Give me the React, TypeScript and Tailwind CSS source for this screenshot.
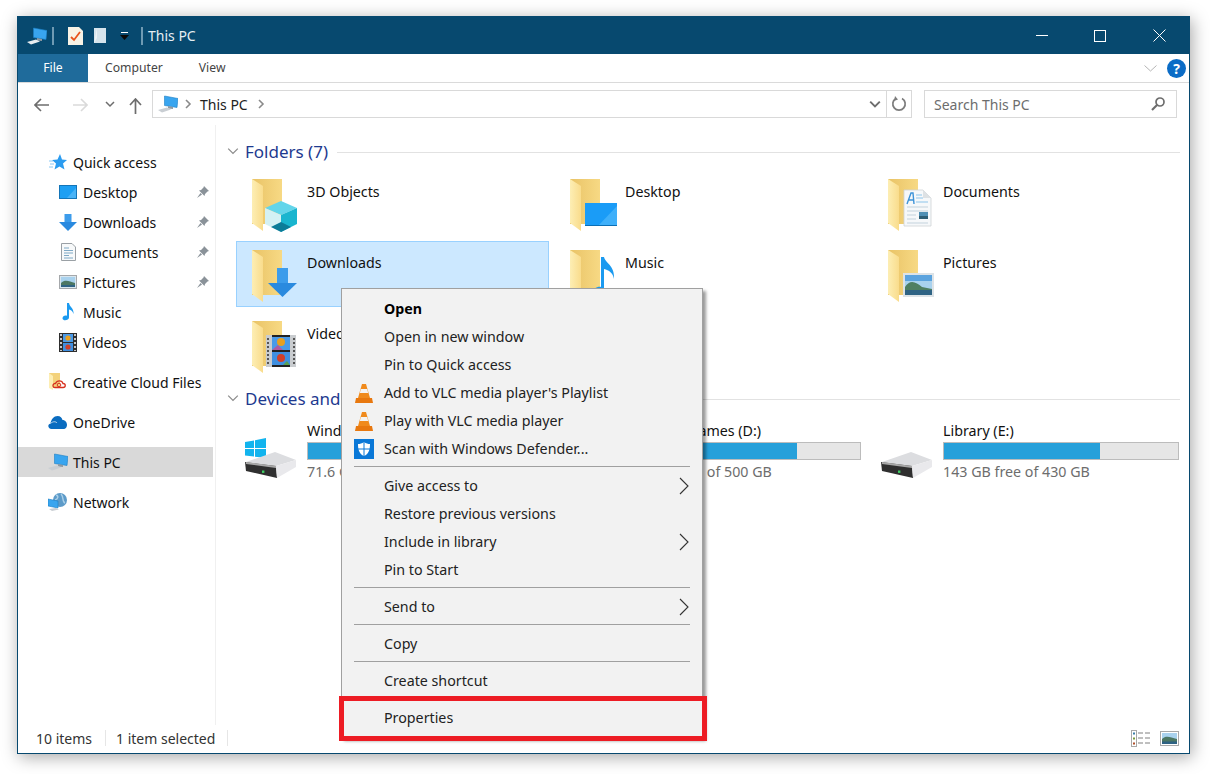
import type { ReactNode } from "react";

function PcIcon({ base = "#c9ced3" }: { base?: string }) {
    return (
        <svg width="20" height="18" viewBox="0 0 20 18" className="shrink-0">
            <path d="M6.5 1 L20 3.5 L19 12.5 L6.5 10.5 Z" fill="#39a5ef" stroke="#1c7fc4" strokeWidth="0.6" />
            <path d="M10 11 L15 12 L15 14 L10 13.5 Z" fill="#8f9aa3" />
            <path d="M0 15 L9 12.5 L13 14.5 L4 17.5 Z" fill={base} />
        </svg>
    );
}

function Chevron({ className = "", dir = "right", color = "#7a7a7a", w = 1.6 }: { className?: string; dir?: "right" | "down"; color?: string; w?: number }) {
    return (
        <svg width="10" height="10" viewBox="0 0 10 10" className={`shrink-0 ${className}`}>
            <path d={dir === "right" ? "M3 1 L7 5 L3 9" : "M1 3 L5 7 L9 3"} fill="none" stroke={color} strokeWidth={w} />
        </svg>
    );
}

function Folder({ children }: { children?: ReactNode }) {
    return (
        <svg width="50" height="56" viewBox="0 0 50 56" className="shrink-0">
            <defs>
                <linearGradient id="fback" x1="0" y1="0" x2="1" y2="0">
                    <stop offset="0" stopColor="#e9c366" />
                    <stop offset="1" stopColor="#f7d984" />
                </linearGradient>
                <linearGradient id="fflap" x1="0" y1="0" x2="1" y2="0">
                    <stop offset="0" stopColor="#fdeeb4" />
                    <stop offset="1" stopColor="#f9dc8c" />
                </linearGradient>
            </defs>
            <rect x="2" y="1" width="30" height="45" fill="url(#fback)" />
            <path d="M2 1 L13 8 L13 53 L2 45 Z" fill="url(#fflap)" />
            {children}
        </svg>
    );
}

const overlayCube = (
    <g>
        <path d="M15 30 L31 23 L47 30 L31 37 Z" fill="#63d5ea" />
        <path d="M15 30 L31 37 L31 54 L15 46 Z" fill="#d4f1f4" />
        <path d="M31 37 L47 30 L47 46 L31 54 Z" fill="#19b5cf" />
        <path d="M21 49 L31 44 L41 49 L31 54 Z" fill="#0c7c98" />
    </g>
);

const overlayArrow = (
    <g>
        <rect x="27" y="19" width="11" height="16" fill="#3c9ceb" />
        <path d="M18 34 L47 34 L32.5 48 Z" fill="#2a8adf" />
    </g>
);

const overlayDesktop = (
    <g>
        <rect x="17" y="25" width="32" height="23" fill="#1a9cf7" />
        <path d="M30 48 L49 28 L49 48 Z" fill="#3fb0fa" />
        <rect x="17" y="47" width="32" height="1" fill="#0b6fb5" />
    </g>
);

const overlayDoc = (
    <g>
        <path d="M18 12 L37 12 L45 20 L45 48 L18 48 Z" fill="#f6f8fa" stroke="#cfd3d6" strokeWidth="0.8" />
        <path d="M37 12 L37 20 L45 20 Z" fill="#dde1e4" />
        <path d="M21 26 L25 15 L27 15 L28 26 M23 22 H27" fill="none" stroke="#3d93d8" strokeWidth="1.4" />
        <path d="M30 17 H36 M30 20 H37 M30 24 H42" stroke="#8cc4ea" strokeWidth="1" />
        <path d="M21 29 H42 M21 33 H42 M21 37 H30 M21 41 H30 M21 45 H42" stroke="#c3d2dc" strokeWidth="1" />
        <rect x="33" y="34" width="9" height="7" fill="#4f8fb4" />
        <rect x="33" y="38" width="9" height="3" fill="#2d5d74" />
    </g>
);

const overlayPicture = (
    <g>
        <rect x="17" y="24" width="31" height="24" fill="#dde3e7" />
        <rect x="19" y="26" width="27" height="20" fill="#a9d2ee" />
        <rect x="19" y="26" width="27" height="6" fill="#5ba3de" />
        <path d="M19 38 C24 30 30 33 36 38 L46 40 L46 46 L19 46 Z" fill="#4f7f62" />
        <rect x="19" y="41" width="27" height="5" fill="#2f6384" />
    </g>
);

const overlayNote = (
    <path d="M33 8 L36 8 C37 14 47 16 46 30 C45 24 41 21 36 20 L36 40 C36 46 27 47 25 44 C24 40 30 37 33 38 Z" fill="#1b9af0" />
);

const overlayFilm = (
    <g>
        <rect x="16" y="15" width="30" height="32" fill="#c9cccf" />
        <rect x="22" y="15" width="18" height="32" fill="#222" />
        <rect x="22" y="17" width="18" height="13" fill="#4a9ae8" />
        <rect x="22" y="32" width="18" height="13" fill="#3f8fe0" />
        <circle cx="31" cy="22" r="4" fill="#e8a020" />
        <circle cx="31" cy="38" r="4" fill="#d0402a" />
        <path d="M22 30 L28 25 L33 30 Z" fill="#b05aa0" />
        <path d="M33 45 L37 41 L40 45 Z" fill="#5aa050" />
        <path d="M18 18 V45 M44 18 V45" stroke="#555" strokeWidth="2" strokeDasharray="2 2" />
    </g>
);

function Drive({ windows = false }: { windows?: boolean }) {
    return (
        <svg width="52" height="40" viewBox="0 0 52 40" className="shrink-0">
            {windows && (
                <path d="M0 4 L9 2.5 L9 10 L0 10 Z M10 2.2 L21 0 L21 10 L10 10 Z M0 11 L9 11 L9 18.5 L0 17.5 Z M10 11 L21 11 L21 20 L10 18.7 Z" fill="#12b4ee" />
            )}
            <g transform="translate(0 14)">
                <path d="M1 10 L30 0 L51 8 L31 14 Z" fill="#dcdde0" />
                <path d="M0 10 L31 14 L32 26 L1 19 Z" fill="#2f2f2f" />
                <path d="M1 10 L31 14 L31 16 L1 12 Z" fill="#a8a8a8" />
                <path d="M31 14 L51 8 L51 15 L32 26 Z" fill="#e9e9ec" />
                <rect x="17" y="18.5" width="2.4" height="2.4" fill="#3ed062" />
            </g>
        </svg>
    );
}

function Pin() {
    return (
        <svg width="12" height="12" viewBox="0 0 12 12" className="shrink-0">
            <path d="M7 0 L12 5 L10.5 5.5 L8 8 L7.5 10 L2 4.5 L4 4 L6.5 1.5 Z" fill="#8a9299" />
            <path d="M3.5 7 L0 12 L5 8.5 Z" fill="#8a9299" />
        </svg>
    );
}

const navIcons: Record<string, ReactNode> = {
    star: (
        <svg width="18" height="16" viewBox="0 0 18 16">
            <path d="M11 0 L13 5.5 L18 6 L14 9.5 L15.5 15.5 L10.5 12.5 L5.5 15.5 L7 9.5 L3 6 L8.5 5.5 Z" fill="#2b9cf0" />
            <path d="M0 7 H4 M1 10 H5 M0 13 H4" stroke="#8ac8f4" strokeWidth="1" />
        </svg>
    ),
    desktop: (
        <svg width="18" height="14" viewBox="0 0 18 14">
            <rect x="0.5" y="0.5" width="17" height="13" fill="#1d9ff3" stroke="#1475b8" />
            <path d="M8 13 L17 3 L17 13 Z" fill="#49b3f7" />
        </svg>
    ),
    downloads: (
        <svg width="18" height="17" viewBox="0 0 18 17">
            <rect x="5.5" y="0" width="7" height="9" fill="#3c9ceb" />
            <path d="M0 8 L18 8 L9 17 Z" fill="#2a8adf" />
        </svg>
    ),
    documents: (
        <svg width="15" height="18" viewBox="0 0 15 18">
            <path d="M0.5 0.5 H11 L14.5 4 V17.5 H0.5 Z" fill="#f7f9fa" stroke="#9aa0a5" />
            <path d="M3 5 H8 M3 7.5 H12 M3 10 H12 M3 12.5 H8 M3 15 H12" stroke="#7fa9c6" strokeWidth="1" />
        </svg>
    ),
    pictures: (
        <svg width="18" height="14" viewBox="0 0 18 14">
            <rect x="0.5" y="0.5" width="17" height="13" fill="#d9e6ee" stroke="#a5a8ab" />
            <rect x="2" y="2" width="14" height="10" fill="#a9d2ee" />
            <path d="M2 8 C6 4 10 6 16 8 V12 H2 Z" fill="#4c7763" />
            <rect x="2" y="10" width="14" height="2" fill="#2f6384" />
        </svg>
    ),
    music: (
        <svg width="12" height="18" viewBox="0 0 12 18">
            <path d="M5 0 H7 C7.5 4 12 5 11.5 11 C10.5 8 9 7 7 6.5 V14.5 C7 17.5 1 18.5 0.5 15.5 C0.5 13 3 12 5 12.8 Z" fill="#1b9af0" />
        </svg>
    ),
    videos: (
        <svg width="18" height="19" viewBox="0 0 18 19">
            <rect width="18" height="19" fill="#2e2e2e" />
            <path d="M2 1 V18 M16 1 V18" stroke="#c8c8c8" strokeWidth="2" strokeDasharray="2 2" />
            <rect x="4" y="1" width="10" height="8" fill="#4a9ae8" />
            <rect x="4" y="10" width="10" height="8" fill="#3f8fe0" />
            <circle cx="9" cy="5" r="2.6" fill="#e8a020" />
            <circle cx="9" cy="14" r="2.6" fill="#d0402a" />
        </svg>
    ),
    cloudFiles: (
        <svg width="18" height="18" viewBox="0 0 18 18">
            <rect x="1" y="0" width="11" height="15" fill="#f3d27c" />
            <path d="M1 0 L5 3 L5 17 L1 15 Z" fill="#fdeeb4" />
            <path d="M7 14.5 C4 14.5 4.5 10 7.5 10.5 C9 7 14 7 15 10.5 C18 10.5 18 14.5 15 14.5 Z" fill="none" stroke="#d7301f" strokeWidth="1.3" />
            <circle cx="11" cy="12" r="1.8" fill="none" stroke="#d7301f" strokeWidth="1" />
        </svg>
    ),
    onedrive: (
        <svg width="19" height="13" viewBox="0 0 19 13">
            <path d="M3.5 13 C0 13 -1 8.5 2.5 7.5 C3 3.5 6 0 9.5 0 C12.5 0 14 2 14.5 4 C18 4 20 8 18.5 11 C18 12.5 16.5 13 15.5 13 Z" fill="#0a6cc0" />
            <path d="M2.5 7.5 C5 5 8 5.5 9 7" fill="none" stroke="#fff" strokeWidth="0.7" />
        </svg>
    ),
    pc: <PcIcon />,
    network: (
        <svg width="20" height="18" viewBox="0 0 20 18">
            <circle cx="12" cy="7" r="7" fill="#5d9bc9" />
            <path d="M8 2 C11 3 10 6 7 7 M13 1 C16 4 14 9 17 10" fill="none" stroke="#a9cfe8" strokeWidth="1.4" />
            <path d="M0 6 L10 8 L10 15 L0 13 Z" fill="#39a5ef" stroke="#1c7fc4" strokeWidth="0.6" />
            <path d="M1 16 L8 15 L11 16.5 L4 18 Z" fill="#c9ced3" />
        </svg>
    ),
};

const quickItems = [
    { label: "Desktop", icon: "desktop", pin: true },
    { label: "Downloads", icon: "downloads", pin: true },
    { label: "Documents", icon: "documents", pin: true },
    { label: "Pictures", icon: "pictures", pin: true },
    { label: "Music", icon: "music", pin: false },
    { label: "Videos", icon: "videos", pin: false },
];

const topItems = [
    { label: "Creative Cloud Files", icon: "cloudFiles" },
    { label: "OneDrive", icon: "onedrive" },
    { label: "This PC", icon: "pc", active: true },
    { label: "Network", icon: "network" },
];

const folders = [
    { label: "3D Objects", overlay: overlayCube },
    { label: "Desktop", overlay: overlayDesktop },
    { label: "Documents", overlay: overlayDoc },
    { label: "Downloads", overlay: overlayArrow, selected: true },
    { label: "Music", overlay: overlayNote },
    { label: "Pictures", overlay: overlayPicture },
    { label: "Videos", overlay: overlayFilm },
];

const drives = [
    { label: "Windows (C:)", free: "71.6 GB free of 237 GB", used: 70, windows: true },
    { label: "Software Games (D:)", free: "199 GB free of 500 GB", used: 73 },
    { label: "Library (E:)", free: "143 GB free of 430 GB", used: 66.5 },
];

const vlcCone = (
    <svg width="18" height="19" viewBox="0 0 18 19">
        <path d="M7 0 H11 L15 14 H3 Z" fill="#f08a1c" />
        <path d="M5.8 5 H12.2 L13.2 9 H4.8 Z" fill="#f4f4f4" />
        <path d="M1 14 H17 L18 19 H0 Z" fill="#e8780f" />
    </svg>
);

const defender = (
    <svg width="20" height="20" viewBox="0 0 20 20">
        <rect width="20" height="20" fill="#0a78d7" />
        <path d="M10 3 C12 4.5 14 5 16 5 C16 11 14.5 15 10 17 C5.5 15 4 11 4 5 C6 5 8 4.5 10 3 Z" fill="#fff" />
        <path d="M9.5 3 H10.5 V17 H9.5 Z M4 9.5 H16 V10.5 H4 Z" fill="#0a78d7" />
    </svg>
);

type MenuEntry = { label?: string; bold?: boolean; icon?: ReactNode; arrow?: boolean; sep?: boolean };

const menu: MenuEntry[] = [
    { label: "Open", bold: true },
    { label: "Open in new window" },
    { label: "Pin to Quick access" },
    { label: "Add to VLC media player's Playlist", icon: vlcCone },
    { label: "Play with VLC media player", icon: vlcCone },
    { label: "Scan with Windows Defender...", icon: defender },
    { sep: true },
    { label: "Give access to", arrow: true },
    { label: "Restore previous versions" },
    { label: "Include in library", arrow: true },
    { label: "Pin to Start" },
    { sep: true },
    { label: "Send to", arrow: true },
    { sep: true },
    { label: "Copy" },
    { sep: true },
    { label: "Create shortcut" },
    { sep: true },
    { label: "Properties" },
];

function SectionHeader({ title }: { title: string }) {
    return (
        <div className="flex items-center h-[26px] pr-[9px]">
            <Chevron dir="down" color="#8a8a8a" w={1} className="ml-[2px] w-[12px] h-[12px]" />
            <span className="ml-[6px] pt-px text-[17px] text-[#1e3a8f] whitespace-nowrap">{title}</span>
            <div className="flex-1 h-px bg-[#e2e2e2] ml-[9px] mt-[2px]" />
        </div>
    );
}

function ContextMenu() {
    return (
        <div className="absolute left-[323px] top-[271px] w-[362px] h-[450px] bg-[#f2f2f2] border border-[#a0a0a0] pt-[6px] shadow-[3px_3px_3px_rgba(0,0,0,0.4)] text-[14.25px] text-[#222]">
            {menu.map((m, i) =>
                m.sep ? (
                    <div key={i} className="h-px bg-[#a0a0a0] ml-[12px] mr-[12px] mt-[3px] mb-[5px]" />
                ) : (
                    <div key={i} className="flex items-center h-[28px]">
                        <span className="w-[42px] flex justify-center pl-[2px] shrink-0">{m.icon}</span>
                        <span className={m.bold ? "font-bold text-black" : ""}>{m.label}</span>
                        {m.arrow && (
                            <svg width="10" height="18" viewBox="0 0 10 18" className="ml-auto mr-[13px]">
                                <path d="M1 1 L9 9 L1 17" fill="none" stroke="#333" strokeWidth="1.1" />
                            </svg>
                        )}
                    </div>
                )
            )}
        </div>
    );
}

export default function App() {
    return (
        <div className="h-[774px] w-[1210px] bg-white pl-[17px] pt-[16px] font-['Noto_Sans',sans-serif] overflow-hidden">
            <div className="relative w-[1173px] h-[738px] bg-white border border-[#07496f] flex flex-col shadow-[2px_3px_16px_rgba(0,0,0,0.35)]">
                {/* title bar */}
                <div className="h-[37px] bg-[#07496f] flex items-center shrink-0 text-white">
                    <span className="ml-[9px]"><PcIcon base="#e8edf0" /></span>
                    <div className="ml-[5px] w-[2px] h-[18px] bg-[#6f9ab3]" />
                    <svg width="15" height="18" viewBox="0 0 15 18" className="ml-[14px]">
                        <path d="M0 0 H11 L15 4 V18 H0 Z" fill="#f8f3e6" />
                        <path d="M3 10 L6 13 L12 5" fill="none" stroke="#e8541c" strokeWidth="1.8" />
                    </svg>
                    <svg width="13" height="17" viewBox="0 0 13 17" className="ml-[11px]">
                        <path d="M0 1 H12 V16 H0 Z" fill="#d6e4ec" />
                        <path d="M3 1 V11 L0 16 Z" fill="#eef4f7" />
                    </svg>
                    <svg width="9" height="8" viewBox="0 0 9 8" className="ml-[13px]">
                        <rect x="1" y="0" width="7" height="1" fill="#fff" />
                        <path d="M0 3 H9 L4.5 8 Z" fill="#0a0a0a" />
                    </svg>
                    <div className="ml-[12px] w-[2px] h-[18px] bg-[#6f9ab3]" />
                    <span className="ml-[5px] text-[14px] text-[#e6eef3]">This PC</span>
                    <div className="ml-auto flex">
                        <div className="w-[58px] flex justify-center items-center">
                            <div className="w-[12px] h-px bg-white" />
                        </div>
                        <div className="w-[58px] flex justify-center items-center">
                            <div className="w-[12px] h-[12px] border border-white" />
                        </div>
                        <div className="w-[60px] flex justify-center items-center">
                            <svg width="13" height="13" viewBox="0 0 13 13">
                                <path d="M0.5 0.5 L12.5 12.5 M12.5 0.5 L0.5 12.5" stroke="#fff" strokeWidth="1" />
                            </svg>
                        </div>
                    </div>
                </div>
                {/* ribbon tabs */}
                <div className="h-[29px] flex border-b border-[#dadada] shrink-0 text-[12.2px] text-[#444] items-stretch">
                    <div className="w-[70px] bg-[#1f6b9b] text-white flex items-center justify-center">File</div>
                    <div className="ml-[17px] flex items-center">Computer</div>
                    <div className="ml-[36px] flex items-center">View</div>
                    <div className="ml-auto flex items-center pr-[3px]">
                        <svg width="13" height="7" viewBox="0 0 13 7">
                            <path d="M0.5 0.5 L6.5 6 L12.5 0.5" fill="none" stroke="#b4b4b4" />
                        </svg>
                        <div className="ml-[10px] w-[19px] h-[19px] rounded-full bg-[#0b6cc6] text-white font-bold text-[14px] flex items-center justify-center">?</div>
                    </div>
                </div>
                {/* address row */}
                <div className="h-[42px] flex items-start pt-[7px] shrink-0">
                    <svg width="15" height="14" viewBox="0 0 15 14" className="ml-[16px] mt-[8px]">
                        <path d="M15 7 H1 M7 1 L1 7 L7 13" fill="none" stroke="#6d6d6d" strokeWidth="1.6" />
                    </svg>
                    <svg width="15" height="14" viewBox="0 0 15 14" className="ml-[24px] mt-[8px]">
                        <path d="M0 7 H14 M8 1 L14 7 L8 13" fill="none" stroke="#dadada" strokeWidth="1.6" />
                    </svg>
                    <Chevron dir="down" color="#6d6d6d" w={1.5} className="ml-[17px] mt-[9px]" />
                    <svg width="13" height="16" viewBox="0 0 13 16" className="ml-[14px] mt-[8px]">
                        <path d="M6.5 16 V1.5 M1 7 L6.5 1 L12 7" fill="none" stroke="#6d6d6d" strokeWidth="1.7" />
                    </svg>
                    <div className="ml-[10px] w-[760px] h-[28px] border border-[#d9d9d9] flex items-center">
                        <span className="ml-[5px]"><PcIcon /></span>
                        <Chevron color="#8a8a8a" className="ml-[5px]" />
                        <span className="ml-[7px] text-[14px] text-[#222]">This PC</span>
                        <Chevron color="#8a8a8a" className="ml-[8px]" />
                        <Chevron dir="down" color="#6d6d6d" w={1.6} className="ml-auto mr-[5px] w-[12px] h-[12px]" />
                        <div className="w-px h-full bg-[#d9d9d9]" />
                        <svg width="16" height="16" viewBox="0 0 16 16" className="mx-[4px]">
                            <path d="M5 2.5 A6.2 6.2 0 1 0 11 2.5" fill="none" stroke="#7c7c7c" strokeWidth="1.7" />
                            <path d="M4 0 L7 3.5 L3 5 Z" fill="#7c7c7c" />
                        </svg>
                    </div>
                    <div className="ml-[12px] w-[253px] h-[28px] border border-[#d9d9d9] flex items-center pl-[9px] pr-[11px] text-[14px] text-[#6d6d6d]">
                        <span>Search This PC</span>
                        <svg width="14" height="14" viewBox="0 0 14 14" className="ml-auto">
                            <circle cx="9" cy="5" r="4" fill="none" stroke="#6d6d6d" strokeWidth="1.7" />
                            <path d="M6 8 L1 13" stroke="#6d6d6d" strokeWidth="2.2" />
                        </svg>
                    </div>
                </div>
                {/* main */}
                <div className="flex h-[600px] shrink-0 text-[14.25px] text-[#111]">
                    <div className="w-[198px] pt-[22px] pr-[2px] border-r border-[#f0f0f0] shrink-0 text-[14px]">
                        <div className="flex items-center h-[30px] pl-[31px]">
                            <span className="w-[24px] flex">{navIcons.star}</span>
                            <span>Quick access</span>
                        </div>
                        {quickItems.map((q) => (
                            <div key={q.label} className="flex items-center h-[30px] pl-[41px]">
                                <span className="w-[24px] flex justify-center pr-[6px]">{navIcons[q.icon]}</span>
                                <span>{q.label}</span>
                                {q.pin && <span className="ml-auto mr-[4px]"><Pin /></span>}
                            </div>
                        ))}
                        {topItems.map((t) => (
                            <div key={t.label} className={`flex items-center h-[30px] mt-[10px] pl-[30px] ${t.active ? "bg-[#d9d9d9]" : ""}`}>
                                <span className="w-[25px] flex">{navIcons[t.icon]}</span>
                                <span>{t.label}</span>
                            </div>
                        ))}
                    </div>
                    <div className="flex-1 pl-[9px] pt-[13px]">
                        <SectionHeader title="Folders (7)" />
                        <div className="grid grid-cols-[313px_313px_313px] gap-[5px] mt-[6px] ml-[11px]">
                            {folders.map((f) => (
                                <div key={f.label} className={`h-[66px] flex items-start pl-[13px] pt-[7px] border ${f.selected ? "bg-[#cce8ff] border-[#99d1ff]" : "border-transparent"}`}>
                                    <Folder>{f.overlay}</Folder>
                                    <span className="ml-[7px] mt-[4px] leading-[20px]">{f.label}</span>
                                </div>
                            ))}
                        </div>
                        <div className="mt-[7px]">
                            <SectionHeader title="Devices and drives (3)" />
                        </div>
                        <div className="grid grid-cols-[313px_313px_313px] gap-[5px] mt-[1px] ml-[11px]">
                            {drives.map((d) => (
                                <div key={d.label} className="h-[70px] flex items-start pl-[9px] pt-[26px]">
                                    <Drive windows={d.windows} />
                                    <div className="ml-[10px] w-[236px] -mt-[17px]">
                                        <div className="leading-[20px] h-[20px] whitespace-nowrap">{d.label}</div>
                                        <div className="mt-[1px] h-[18px] border border-[#bcbcbc] bg-[#e6e6e6]">
                                            <div className="h-full bg-[#26a0da]" style={{ width: `${d.used}%` }} />
                                        </div>
                                        <div className="leading-[20px] h-[20px] mt-[2px] text-[#6d6d6d]">{d.free}</div>
                                    </div>
                                </div>
                            ))}
                        </div>
                    </div>
                </div>
                {/* status bar */}
                <div className="h-[28px] flex items-center text-[14px] text-[#333] shrink-0 pl-[18px] pb-[2px]">
                    <span>10 items</span>
                    <div className="ml-[13px] w-px h-[16px] bg-[#e6e6e6]" />
                    <span className="ml-[10px]">1 item selected</span>
                    <div className="ml-[12px] w-px h-[16px] bg-[#e6e6e6]" />
                    <svg width="20" height="17" viewBox="0 0 20 17" className="ml-auto">
                        <rect x="0.5" y="0.5" width="5" height="16" fill="#fff" stroke="#a8a8a8" />
                        <rect x="2" y="2.5" width="2" height="2" fill="#3a7fa8" />
                        <rect x="2" y="7.5" width="2" height="2" fill="#7a9a3a" />
                        <rect x="2" y="12.5" width="2" height="2" fill="#b0502a" />
                        <path d="M7 3 H12 M14 3 H19 M7 8 H12 M14 8 H19 M7 13 H12 M14 13 H19" stroke="#808080" />
                    </svg>
                    <svg width="19" height="15" viewBox="0 0 19 15" className="ml-[9px] mr-[10px]">
                        <rect x="0.5" y="0.5" width="18" height="14" fill="#fff" stroke="#a8a8a8" />
                        <rect x="2" y="2" width="15" height="11" fill="#a9d2ee" />
                        <path d="M2 8 C6 4 10 6 17 8 V13 H2 Z" fill="#4c7763" />
                        <rect x="2" y="10.5" width="15" height="2.5" fill="#2f6384" />
                    </svg>
                </div>
                <ContextMenu />
                <div className="absolute left-[321px] top-[679px] w-[368px] h-[45px] border-[5px] border-[#ed1c24]" />
            </div>
        </div>
    );
}
